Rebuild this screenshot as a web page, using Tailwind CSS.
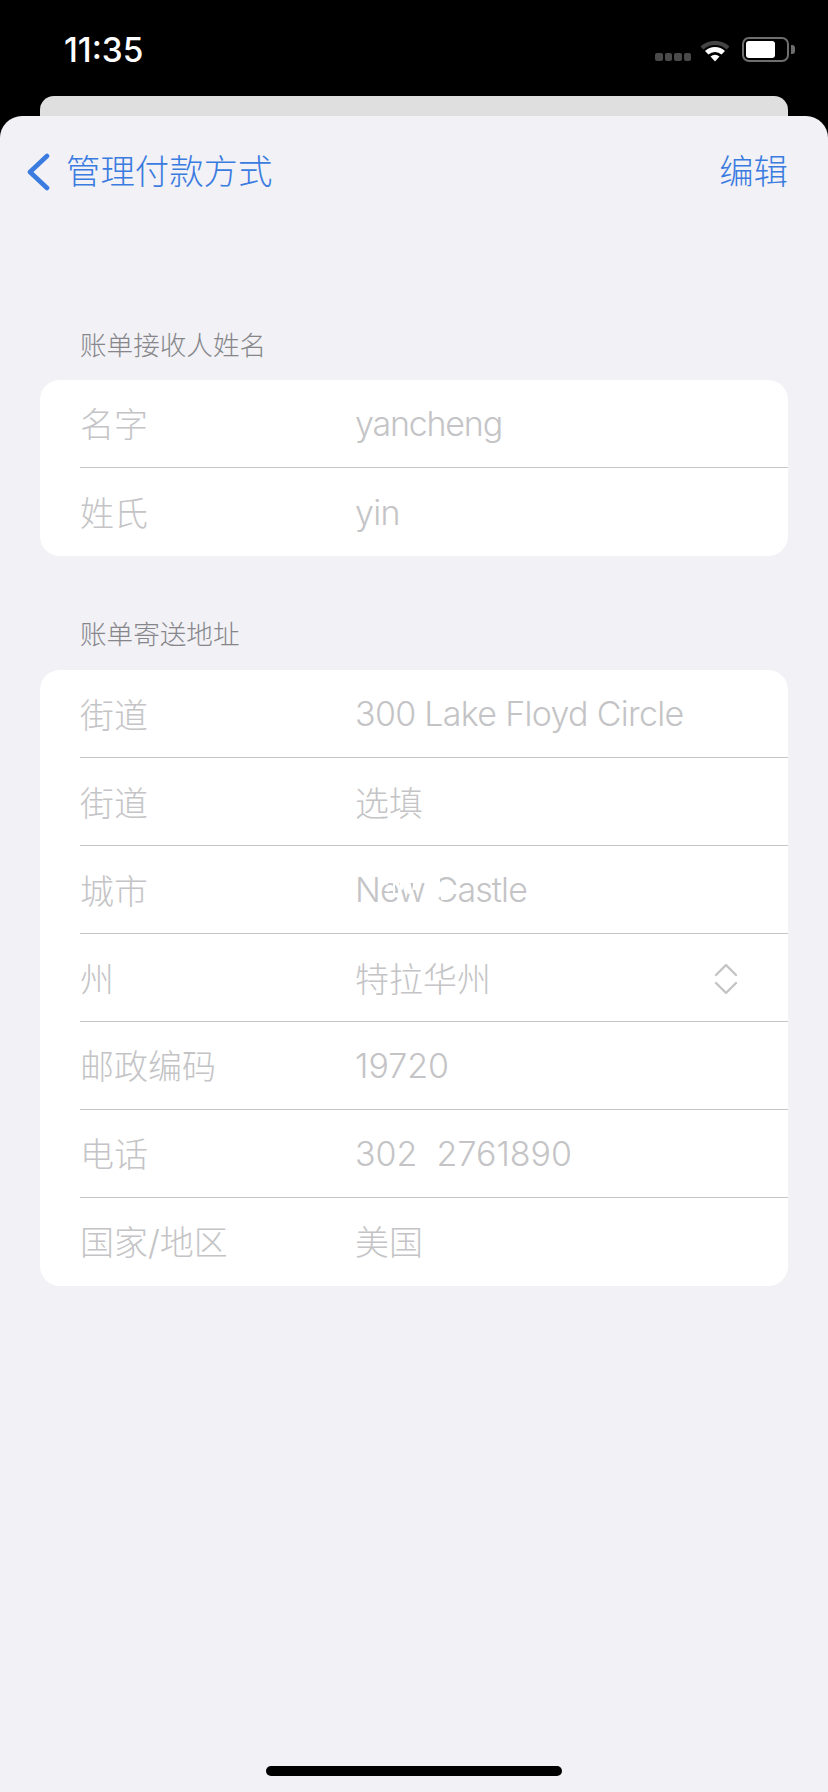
<!DOCTYPE html>
<html lang="zh">
<head>
<meta charset="utf-8">
<script src="https://cdn.jsdelivr.net/npm/@tailwindcss/browser@4"></script>
</head>
<body class="m-0 bg-black">
<div class="w-[828px] h-[1792px] overflow-hidden bg-black flex flex-col font-['Inter','Noto_Sans_CJK_SC',sans-serif]">
  <div class="h-[96px] shrink-0 flex items-start justify-between">
    <div class="ml-[64px] mt-[32px] text-white text-[33.4px] leading-[36px] font-medium">11:35</div>
    <div class="flex items-start mr-[33px] mt-[37px]">
      <div class="flex gap-[2px] mt-[16px] mr-[8px]">
        <span class="w-[7.5px] h-[8px] rounded-[2px] bg-[#4a4a4a]"></span><span class="w-[7.5px] h-[8px] rounded-[2px] bg-[#4a4a4a]"></span><span class="w-[7.5px] h-[8px] rounded-[2px] bg-[#4a4a4a]"></span><span class="w-[7.5px] h-[8px] rounded-[2px] bg-[#4a4a4a]"></span>
      </div>
      <svg class="mr-[11px] mt-[1px]" width="32" height="24" viewBox="0 0 32 24">
        <path d="M1.5 8.5 A21 21 0 0 1 30.5 8.5 L27.5 11.5 A17 17 0 0 0 4.5 11.5 Z" fill="#444"/>
        <path d="M6 13 A14.5 14.5 0 0 1 26 13 L22.5 16.5 A9.5 9.5 0 0 0 9.5 16.5 Z" fill="#fff"/>
        <path d="M11.5 18.5 A7 7 0 0 1 20.5 18.5 L16 23.5 Z" fill="#fff"/>
      </svg>
      <div class="w-[47px] h-[25px] rounded-[7px] border-[2px] border-[#6e6e6e] p-[2px] bg-black">
        <div class="w-[29px] h-full rounded-[3px] bg-white"></div>
      </div>
      <div class="w-[4px] h-[9px] mt-[8px] ml-[2px] rounded-r-[3px] bg-[#6e6e6e]"></div>
    </div>
  </div>
  <div class="h-[40px] mx-[40px] shrink-0 rounded-t-[14px] bg-[#dfdfdf]"></div>
  <div class="-mt-[20px] relative flex-1 bg-[#f1f1f6] rounded-t-[22px] flex flex-col">
    <div class="h-[112px] shrink-0 flex items-center justify-between pl-[26px] pr-[40px] text-[#3a7be0] text-[34.4px] font-light">
      <div class="flex items-center">
        <svg width="24" height="38" viewBox="0 0 24 38" class="mr-[16px]"><path d="M21 3 L4 19 L21 35" fill="none" stroke="#3a7be0" stroke-width="4.6" stroke-linecap="round" stroke-linejoin="round"/></svg>
        <span>管理付款方式</span>
      </div>
      <span>编辑</span>
    </div>
    <div class="h-[152px] shrink-0 pl-[80px] pt-[99px] text-[26.6px] leading-[36px] text-[#86868a] font-light">账单接收人姓名</div>
    <div class="mx-[40px] rounded-[20px] bg-white pl-[40px] text-[34px] font-light text-[#c4c4c6]">
      <div class="h-[87px] flex items-center"><span class="w-[275px] mt-[2px]">名字</span><span class="tracking-[-1.2px]">yancheng</span></div>
      <div class="h-[1px] bg-[#c6c6c8]"></div>
      <div class="h-[88px] flex items-center"><span class="w-[275px] mt-[2px]">姓氏</span><span class="tracking-[-0.7px]">yin</span></div>
    </div>
    <div class="h-[114px] shrink-0 pl-[80px] pt-[60px] text-[26.6px] leading-[36px] text-[#86868a] font-light">账单寄送地址</div>
    <div class="mx-[40px] rounded-[20px] bg-white pl-[40px] text-[34px] font-light text-[#c4c4c6]">
      <div class="h-[88px] flex items-center border-b border-[#c6c6c8]"><span class="w-[275px] mt-[3px]">街道</span><span class="tracking-[-0.7px]">300 Lake Floyd Circle</span></div>
      <div class="h-[88px] flex items-center border-b border-[#c6c6c8]"><span class="w-[275px] mt-[3px]">街道</span><span class="mt-[3px]">选填</span></div>
      <div class="h-[88px] flex items-center border-b border-[#c6c6c8]"><span class="w-[275px] mt-[3px]">城市</span>
        <span class="relative tracking-[-0.9px]">New Castle
          <svg class="absolute left-[28px] top-[5px]" width="74" height="36" viewBox="0 0 74 36"><g fill="#fff"><rect x="1" y="12" width="4" height="4" rx="2"/><rect x="3" y="19" width="4" height="4" rx="2"/><rect x="10" y="14" width="2" height="12" rx="1"/><rect x="17" y="12" width="3" height="9" rx="1"/><rect x="25" y="15" width="3" height="10" rx="1"/><rect x="30" y="13" width="3" height="8" rx="1"/><rect x="49" y="9" width="8" height="20" rx="2"/><rect x="60" y="13" width="7" height="9" rx="2"/><rect x="58" y="26" width="6" height="5" rx="1"/></g></svg>
        </span>
      </div>
      <div class="h-[88px] flex items-center border-b border-[#c6c6c8]"><span class="w-[275px] mt-[4px]">州</span><span class="mt-[4px]">特拉华州</span>
        <svg class="ml-auto mr-[50px] mt-[2px]" width="24" height="34" viewBox="0 0 24 34"><path d="M2 13 L12 3 L22 13 M2 21 L12 31 L22 21" fill="none" stroke="#c4c4c6" stroke-width="2.4" stroke-linecap="round" stroke-linejoin="round"/></svg>
      </div>
      <div class="h-[88px] flex items-center border-b border-[#c6c6c8]"><span class="w-[275px] mt-[2px]">邮政编码</span><span>19720</span></div>
      <div class="h-[88px] flex items-center border-b border-[#c6c6c8]"><span class="w-[275px] mt-[2px]">电话</span><span class="whitespace-pre">302  2761890</span></div>
      <div class="h-[88px] flex items-center"><span class="w-[275px]">国家/地区</span><span>美国</span></div>
    </div>
    <div class="mt-auto mb-[16px] self-center w-[296px] h-[10px] rounded-full bg-black"></div>
  </div>
</div>
</body>
</html>
